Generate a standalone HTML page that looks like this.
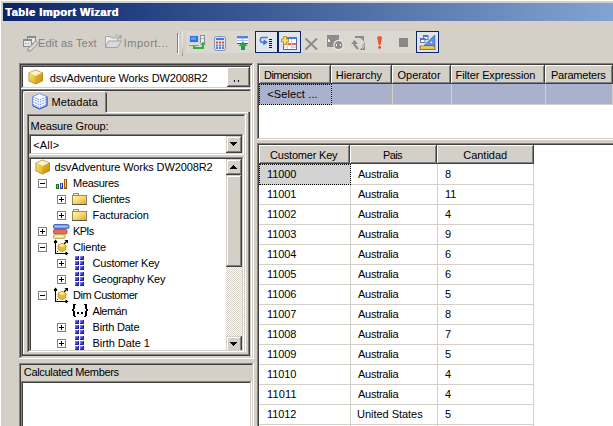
<!DOCTYPE html><html><head><meta charset="utf-8"><style>
html,body{margin:0;padding:0;width:613px;height:426px;overflow:hidden;background:#D4D0C8}
body>div,body>span,body>svg{position:absolute}
.t{font-family:"Liberation Sans",sans-serif;font-size:11px;line-height:13px;white-space:nowrap;color:#000}
</style></head><body>
<div style="left:0px;top:0px;width:613px;height:426px;background:#D4D0C8;"></div>
<div style="left:0px;top:0px;width:613px;height:1px;background:#FFFFFF;"></div>
<div style="left:0px;top:0px;width:1px;height:426px;background:#FFFFFF;"></div>
<div style="left:3px;top:3px;width:610px;height:18px;background:linear-gradient(to right,#0A246A 0px,#A6CAF0 790px)"></div>
<span class="t" style="left:5.00px;top:6px;color:#fff;letter-spacing:0.500px;font-weight:bold;font-size:11px;text-shadow:0.6px 0 0 #fff">Table Import Wizard</span>
<svg style="left:22px;top:35px" width="17" height="17" viewBox="0 0 17 17" shape-rendering="crispEdges">
<rect x="5" y="1" width="9" height="8" fill="#8a8a8a"/><rect x="6" y="3" width="7" height="5" fill="#e6e6e6"/>
<rect x="1" y="4" width="9" height="8" fill="#8a8a8a"/><rect x="2" y="6" width="7" height="5" fill="#e6e6e6"/>
<rect x="3" y="8" width="1" height="1" fill="#8a8a8a"/><rect x="6" y="8" width="1" height="1" fill="#8a8a8a"/></svg>
<svg style="left:22px;top:35px" width="17" height="17" viewBox="0 0 17 17"><path d="M13.5 6 L16 8.5 L8.5 16 L6 16 L6 13.5 Z" fill="#dcdcdc" stroke="#8a8a8a" stroke-width="1"/><path d="M12 8.5 L8 12.5" stroke="#b0b0b0" stroke-width="1"/></svg>
<span class="t" style="left:38.00px;top:37px;color:#808080;letter-spacing:0.181px;">Edit as Text</span>
<svg style="left:104px;top:34px" width="19" height="15" viewBox="0 0 19 15">
<path d="M1.5 2.5 H6.5 L7.5 4 H13.5 V13.5 H1.5 Z" fill="#ececec" stroke="#a4a4a4"/>
<path d="M1.5 13.5 L4.5 7 H17.5 L13.5 13.5 Z" fill="#d9d9d9" stroke="#a4a4a4"/>
<path d="M10.5 2.5 Q12.5 0.3 15 1.3" fill="none" stroke="#a8a8a8"/>
<path d="M13.8 3.8 L17.5 0.5 V4.8 Z" fill="#a0a0a0"/></svg>
<span class="t" style="left:123.70px;top:37px;color:#808080;letter-spacing:0.500px;">Import...</span>
<div style="left:177px;top:33px;width:1px;height:20px;background:#808080;"></div>
<div style="left:178px;top:34px;width:1px;height:20px;background:#FFFFFF;"></div>
<div style="left:182px;top:31px;width:1px;height:25px;background:linear-gradient(#f0eee8 0%,#e4e2dc 55%,#a8a8a8 90%,#909090 100%)"></div>
<div style="left:186px;top:31px;width:253px;height:22px;background:#DBD8D1;"></div>
<svg style="left:188px;top:34px" width="18" height="17" viewBox="0 0 18 17" shape-rendering="crispEdges">
<rect x="1" y="1" width="10" height="8" fill="#c8d4e4"/>
<rect x="2" y="2" width="8" height="6" fill="#2f6fe0"/>
<rect x="3" y="3" width="5" height="3" fill="#5a9af4"/>
<rect x="1" y="9" width="10" height="3" fill="#dcdcdc"/><rect x="1" y="11" width="10" height="1" fill="#8a8f9a"/>
<rect x="2" y="10" width="3" height="1" fill="#e0f0a0"/>
<rect x="12" y="1" width="5" height="8" fill="#eef0f4"/>
<rect x="12" y="1" width="1" height="8" fill="#8890a0"/><rect x="16" y="1" width="1" height="8" fill="#8890a0"/><rect x="12" y="1" width="5" height="1" fill="#8890a0"/>
<rect x="13" y="4" width="3" height="1" fill="#a8b0c0"/>
<rect x="5" y="12" width="2" height="3" fill="#3aa83a"/>
<rect x="5" y="13" width="11" height="2" fill="#3aa83a"/>
<rect x="14" y="9" width="2" height="6" fill="#3aa83a"/></svg>
<svg style="left:188px;top:34px" width="18" height="17" viewBox="0 0 18 17"><path d="M12 10.8 L15 7.8 L18 10.8 Z" fill="#3aa83a"/></svg>
<svg style="left:213px;top:36px" width="14" height="16" viewBox="0 0 14 16">
<rect x="1.5" y="0.5" width="11" height="14" rx="2" fill="#dfe6f2" stroke="#8494b4"/>
<rect x="3" y="2" width="8" height="2" fill="#4a78d8"/>
<rect x="3" y="5.5" width="2" height="2" fill="#e05030"/><rect x="6" y="5.5" width="2" height="2" fill="#e05030"/><rect x="9" y="5.5" width="2" height="2" fill="#e05030"/>
<rect x="3" y="8.5" width="2" height="2" fill="#5a80d8"/><rect x="6" y="8.5" width="2" height="2" fill="#5a80d8"/><rect x="9" y="8.5" width="2" height="2" fill="#5a80d8"/>
<rect x="3" y="11" width="2" height="2" fill="#5a80d8"/><rect x="6" y="11" width="2" height="2" fill="#5a80d8"/><rect x="9" y="11" width="2" height="2" fill="#5a80d8"/></svg>
<svg style="left:236px;top:35px" width="13" height="16" viewBox="0 0 13 16" shape-rendering="crispEdges">
<rect x="1" y="1" width="11" height="8" fill="#ffffff"/>
<rect x="1" y="1" width="11" height="2" fill="#5080e0"/>
<rect x="1" y="3" width="11" height="1" fill="#b0c8f4"/>
<rect x="1" y="5" width="11" height="1" fill="#a8c0f0"/>
<rect x="6" y="3" width="1" height="5" fill="#a8c0f0"/>
<rect x="1" y="8" width="11" height="1" fill="#34508a"/>
<rect x="5" y="10" width="4" height="5" fill="#1e9e40"/></svg>
<svg style="left:236px;top:35px" width="13" height="16" viewBox="0 0 13 16"><path d="M7 6.5 L11.5 11 H2.5 Z" fill="#22a848"/></svg>
<div style="left:255px;top:31px;width:23px;height:22px;background:#0A246A;"></div>
<div style="left:256px;top:32px;width:21px;height:20px;background:#E2E5ED;"></div>
<div style="left:278px;top:31px;width:23px;height:22px;background:#0A246A;"></div>
<div style="left:279px;top:32px;width:21px;height:20px;background:#E2E5ED;"></div>
<div style="left:416px;top:31px;width:23px;height:22px;background:#0A246A;"></div>
<div style="left:417px;top:32px;width:21px;height:20px;background:#E2E5ED;"></div>
<svg style="left:258px;top:36px" width="17" height="13" viewBox="0 0 17 13">
<path d="M9.7 1.6 H4.2 Q2.4 1.6 2.4 3.5 V4.6 Q2.4 6.4 4.6 6.6 H6.5" fill="none" stroke="#4a78d8" stroke-width="1.5"/>
<path d="M5.6 3.4 L9.9 6.3 L5.2 9.4 Z" fill="#3f6fd4"/></svg>
<svg style="left:258px;top:36px" width="17" height="13" viewBox="0 0 17 13" shape-rendering="crispEdges"><rect x="11" y="3" width="3" height="1" fill="#111"/><rect x="11" y="5" width="3" height="1" fill="#111"/><rect x="11" y="7" width="3" height="1" fill="#111"/><rect x="11" y="9" width="3" height="1" fill="#111"/><rect x="11" y="11" width="3" height="1" fill="#111"/></svg>
<svg style="left:280px;top:35px" width="19" height="16" viewBox="0 0 19 16" shape-rendering="crispEdges">
<rect x="3" y="2" width="14" height="13" fill="#ffffff"/>
<rect x="3" y="2" width="1" height="13" fill="#5a6a8a"/><rect x="16" y="2" width="1" height="13" fill="#5a6a8a"/><rect x="3" y="14" width="14" height="1" fill="#5a6a8a"/>
<rect x="3" y="2" width="14" height="2" fill="#4a7ad8"/>
<rect x="4" y="8" width="12" height="2" fill="#ee6644"/>
<rect x="7" y="4" width="1" height="10" fill="#c8d0e0"/><rect x="11" y="4" width="1" height="10" fill="#c8d0e0"/>
<rect x="4" y="11" width="3" height="2" fill="#dde8ff"/><rect x="12" y="11" width="4" height="2" fill="#c8d8f8"/></svg>
<svg style="left:280px;top:35px" width="19" height="16" viewBox="0 0 19 16"><path d="M3.5 1.5 H6.5 V4 H8.5 V7 H6.5 V9.5 H3.5 V7 H1.5 V4 H3.5 Z" fill="#f4dc70" stroke="#b89028" stroke-width="0.9"/></svg>
<svg style="left:304px;top:37px" width="15" height="14" viewBox="0 0 15 14"><path d="M1.5 1.5 L13 12.5 M13 1.5 L1.5 12.5" stroke="#8c8c8c" stroke-width="2"/></svg>
<svg style="left:326px;top:34px" width="19" height="18" viewBox="0 0 19 18" shape-rendering="crispEdges">
<rect x="1" y="1" width="12" height="12" fill="#8c8c8c"/>
<rect x="2" y="5" width="1" height="3" fill="#f4f4f4"/><rect x="3" y="6" width="1" height="2" fill="#f4f4f4"/></svg>
<svg style="left:326px;top:34px" width="19" height="18" viewBox="0 0 19 18">
<circle cx="12.5" cy="11" r="4.6" fill="#8c8c8c" stroke="#ececec" stroke-width="1.2"/></svg>
<svg style="left:326px;top:34px" width="19" height="18" viewBox="0 0 19 18" shape-rendering="crispEdges"><rect x="10" y="10" width="1" height="2" fill="#f0f0f0"/><rect x="14" y="10" width="1" height="2" fill="#f0f0f0"/></svg>
<svg style="left:350px;top:35px" width="16" height="16" viewBox="0 0 16 16">
<path d="M5 2 H11 L13 4" fill="none" stroke="#8c8c8c" stroke-width="2.2"/>
<path d="M10 1 H14 V7 Z" fill="#8c8c8c"/>
<path d="M1 9 L4.5 5 L8 9 Z" fill="#8c8c8c"/>
<path d="M4.5 8 V10 L8 14" fill="none" stroke="#8c8c8c" stroke-width="2.2"/>
<path d="M15 7 V15 H10 Z" fill="#8c8c8c"/>
<path d="M11 12 L12.5 13.5 L14.5 10" fill="none" stroke="#e0ddd6" stroke-width="1"/></svg>
<svg style="left:375px;top:35px" width="9" height="15" viewBox="0 0 9 15">
<path d="M2.6 2.2 Q4.6 0.8 6.6 2.2 L5 10 H4.2 Z" fill="#f25a34" stroke="#d83c18" stroke-width="0.7"/>
<circle cx="4.6" cy="12.4" r="1.4" fill="#e84420"/></svg>
<div style="left:399px;top:38px;width:9px;height:9px;background:#888888;"></div>
<svg style="left:419px;top:34px" width="18" height="17" viewBox="0 0 18 17">
<path d="M5 11.5 L15.8 1 V11.5 Z" fill="#5f8fe6" stroke="#3a5cb8" stroke-width="0.7"/>
<circle cx="12.3" cy="8.3" r="0.9" fill="#e8f0ff"/>
<rect x="4.5" y="1.5" width="4.5" height="4" fill="#f4f8ff" stroke="#4a5a80" stroke-width="0.8"/><rect x="4.5" y="1.5" width="4.5" height="1.5" fill="#4a7ad8"/>
<rect x="1.5" y="4.5" width="4.5" height="4" fill="#f4f8ff" stroke="#4a5a80" stroke-width="0.8"/><rect x="1.5" y="4.5" width="4.5" height="1.5" fill="#4a7ad8"/>
<rect x="1" y="12" width="15" height="3.6" fill="#ecbe48" stroke="#8a6810" stroke-width="0.8"/>
<path d="M3 12 V13.5 M5 12 V13.5 M7 12 V13.5 M9 12 V13.5 M11 12 V13.5 M13 12 V13.5" stroke="#fff2c0" stroke-width="0.8"/></svg>
<div style="left:19px;top:63px;width:234px;height:1px;background:#808080;"></div>
<div style="left:19px;top:63px;width:1px;height:295px;background:#808080;"></div>
<div style="left:20px;top:64px;width:232px;height:1px;background:#404040;"></div>
<div style="left:20px;top:64px;width:1px;height:293px;background:#404040;"></div>
<div style="left:19px;top:358px;width:235px;height:1px;background:#FFFFFF;"></div>
<div style="left:253px;top:63px;width:1px;height:296px;background:#FFFFFF;"></div>
<div style="left:20px;top:357px;width:233px;height:1px;background:#D4D0C8;"></div>
<div style="left:252px;top:64px;width:1px;height:294px;background:#D4D0C8;"></div>
<div style="left:21px;top:65px;width:231px;height:24px;background:#FFFFFF;"></div>
<div style="left:21px;top:65px;width:230px;height:1px;background:#808080;"></div>
<div style="left:21px;top:65px;width:1px;height:23px;background:#808080;"></div>
<div style="left:22px;top:66px;width:228px;height:1px;background:#404040;"></div>
<div style="left:22px;top:66px;width:1px;height:21px;background:#404040;"></div>
<div style="left:21px;top:88px;width:231px;height:1px;background:#FFFFFF;"></div>
<div style="left:251px;top:65px;width:1px;height:24px;background:#FFFFFF;"></div>
<div style="left:22px;top:87px;width:229px;height:1px;background:#D4D0C8;"></div>
<div style="left:250px;top:66px;width:1px;height:22px;background:#D4D0C8;"></div>
<svg style="left:28px;top:69px" width="16" height="16" viewBox="0 0 16 16"><defs><linearGradient id="cl1" x1="0" y1="0" x2="1" y2="1"><stop offset="0" stop-color="#f6e07a"/><stop offset="1" stop-color="#e0b428"/></linearGradient>
<linearGradient id="cr1" x1="0" y1="0" x2="1" y2="1"><stop offset="0" stop-color="#e8b830"/><stop offset="1" stop-color="#c89010"/></linearGradient></defs>
<path d="M7.5 0.5 L15 3.8 V12 L7.5 15.5 L0.5 12 V3.8 Z" fill="#b88a18"/>
<path d="M7.5 1.3 L14.2 4.1 L7.5 7.3 L1.3 4.1 Z" fill="#fbf3cc"/>
<path d="M7.5 7.3 L14.2 4.1 V11.6 L7.5 14.7 Z" fill="url(#cr1)"/>
<path d="M1.3 4.1 L7.5 7.3 V14.7 L1.3 11.6 Z" fill="url(#cl1)"/></svg>
<span class="t" style="left:49.80px;top:72px;color:#000;letter-spacing:-0.131px;">dsvAdventure Works DW2008R2</span>
<div style="left:227px;top:67px;width:22px;height:20px;background:#D4D0C8;"></div>
<div style="left:227px;top:67px;width:22px;height:1px;background:#FFFFFF;"></div>
<div style="left:227px;top:67px;width:1px;height:19px;background:#FFFFFF;"></div>
<div style="left:227px;top:86px;width:23px;height:1px;background:#404040;"></div>
<div style="left:249px;top:67px;width:1px;height:20px;background:#404040;"></div>
<div style="left:228px;top:85px;width:21px;height:1px;background:#808080;"></div>
<div style="left:248px;top:68px;width:1px;height:18px;background:#808080;"></div>
<div style="left:233px;top:80px;width:1px;height:2px;background:#e0c070;"></div>
<div style="left:234px;top:80px;width:1px;height:2px;background:#180c48;"></div>
<div style="left:235px;top:80px;width:1px;height:2px;background:#a0e0d8;"></div>
<div style="left:237px;top:80px;width:1px;height:2px;background:#e0c070;"></div>
<div style="left:238px;top:80px;width:1px;height:2px;background:#180c48;"></div>
<div style="left:239px;top:80px;width:1px;height:2px;background:#a0e0d8;"></div>
<div style="left:21px;top:89px;width:230px;height:1px;background:#808080;"></div>
<div style="left:21px;top:89px;width:1px;height:268px;background:#808080;"></div>
<div style="left:22px;top:90px;width:228px;height:1px;background:#404040;"></div>
<div style="left:22px;top:90px;width:1px;height:266px;background:#404040;"></div>
<div style="left:21px;top:357px;width:231px;height:1px;background:#FFFFFF;"></div>
<div style="left:251px;top:89px;width:1px;height:269px;background:#FFFFFF;"></div>
<div style="left:22px;top:356px;width:229px;height:1px;background:#D4D0C8;"></div>
<div style="left:250px;top:90px;width:1px;height:267px;background:#D4D0C8;"></div>
<div style="left:21px;top:357px;width:231px;height:1px;background:#D4D0C8;"></div>
<div style="left:107px;top:112px;width:141px;height:1px;background:#FFFFFF;"></div>
<div style="left:23px;top:112px;width:1px;height:243px;background:#FFFFFF;"></div>
<div style="left:248px;top:112px;width:1px;height:243px;background:#808080;"></div>
<div style="left:249px;top:112px;width:1px;height:244px;background:#404040;"></div>
<div style="left:23px;top:354px;width:226px;height:1px;background:#808080;"></div>
<div style="left:23px;top:355px;width:227px;height:1px;background:#404040;"></div>
<div style="left:25px;top:91px;width:80px;height:1px;background:#FFFFFF;"></div>
<div style="left:23px;top:93px;width:1px;height:20px;background:#FFFFFF;"></div>
<div style="left:24px;top:92px;width:1px;height:1px;background:#FFFFFF;"></div>
<div style="left:105px;top:92px;width:1px;height:20px;background:#808080;"></div>
<div style="left:106px;top:93px;width:1px;height:19px;background:#404040;"></div>
<svg style="left:32px;top:93px" width="16" height="17" viewBox="0 0 16 17">
<path d="M7.5 0.5 L15 3.6 V12.6 L7.5 16 L0.5 12.6 V3.6 Z" fill="#f4f8ff" stroke="#6a8ce0" stroke-width="0.9"/>
<path d="M0.8 6 L7.5 9.2 L15 6 M0.8 8.6 L7.5 11.8 L15 8.6 M0.8 11.2 L7.5 14.4 L15 11.2 M0.8 3.8 L7.5 7 L15 3.8" fill="none" stroke="#6a90e8" stroke-width="1" stroke-dasharray="1.6 1"/>
<path d="M0.5 12.6 L7.5 16 L15 12.6 V3.6" fill="none" stroke="#2c48b0" stroke-width="1"/></svg>
<span class="t" style="left:51.60px;top:96px;color:#000;letter-spacing:0.054px;">Metadata</span>
<div style="left:27px;top:114px;width:218px;height:1px;background:#808080;"></div>
<div style="left:27px;top:114px;width:1px;height:238px;background:#808080;"></div>
<div style="left:28px;top:115px;width:216px;height:1px;background:#404040;"></div>
<div style="left:28px;top:115px;width:1px;height:236px;background:#404040;"></div>
<div style="left:27px;top:352px;width:219px;height:1px;background:#FFFFFF;"></div>
<div style="left:245px;top:114px;width:1px;height:239px;background:#FFFFFF;"></div>
<div style="left:28px;top:351px;width:217px;height:1px;background:#D4D0C8;"></div>
<div style="left:244px;top:115px;width:1px;height:237px;background:#D4D0C8;"></div>
<div style="left:27px;top:352px;width:219px;height:1px;background:#D4D0C8;"></div>
<span class="t" style="left:30.60px;top:120px;color:#000;letter-spacing:-0.120px;">Measure Group:</span>
<div style="left:29px;top:134px;width:215px;height:21px;background:#FFFFFF;"></div>
<div style="left:29px;top:134px;width:214px;height:1px;background:#808080;"></div>
<div style="left:29px;top:134px;width:1px;height:20px;background:#808080;"></div>
<div style="left:30px;top:135px;width:212px;height:1px;background:#404040;"></div>
<div style="left:30px;top:135px;width:1px;height:18px;background:#404040;"></div>
<div style="left:29px;top:154px;width:215px;height:1px;background:#FFFFFF;"></div>
<div style="left:243px;top:134px;width:1px;height:21px;background:#FFFFFF;"></div>
<div style="left:30px;top:153px;width:213px;height:1px;background:#D4D0C8;"></div>
<div style="left:242px;top:135px;width:1px;height:19px;background:#D4D0C8;"></div>
<span class="t" style="left:33.20px;top:139px;color:#000;letter-spacing:0.200px;">&lt;All&gt;</span>
<div style="left:226px;top:136px;width:16px;height:17px;background:#D4D0C8;"></div>
<div style="left:226px;top:136px;width:15px;height:1px;background:#D4D0C8;"></div>
<div style="left:226px;top:136px;width:1px;height:16px;background:#D4D0C8;"></div>
<div style="left:227px;top:137px;width:13px;height:1px;background:#FFFFFF;"></div>
<div style="left:227px;top:137px;width:1px;height:14px;background:#FFFFFF;"></div>
<div style="left:226px;top:152px;width:16px;height:1px;background:#404040;"></div>
<div style="left:241px;top:136px;width:1px;height:17px;background:#404040;"></div>
<div style="left:227px;top:151px;width:14px;height:1px;background:#808080;"></div>
<div style="left:240px;top:137px;width:1px;height:15px;background:#808080;"></div>
<svg style="left:230px;top:142px" width="8" height="5" viewBox="0 0 8 5" shape-rendering="crispEdges"><path d="M0 0 H7 L3.5 4 Z" fill="#000"/></svg>
<div style="left:29px;top:157px;width:215px;height:195px;background:#FFFFFF;"></div>
<div style="left:29px;top:157px;width:214px;height:1px;background:#808080;"></div>
<div style="left:29px;top:157px;width:1px;height:194px;background:#808080;"></div>
<div style="left:30px;top:158px;width:212px;height:1px;background:#404040;"></div>
<div style="left:30px;top:158px;width:1px;height:192px;background:#404040;"></div>
<div style="left:29px;top:351px;width:215px;height:1px;background:#FFFFFF;"></div>
<div style="left:243px;top:157px;width:1px;height:195px;background:#FFFFFF;"></div>
<div style="left:30px;top:350px;width:213px;height:1px;background:#D4D0C8;"></div>
<div style="left:242px;top:158px;width:1px;height:193px;background:#D4D0C8;"></div>
<div style="left:226px;top:159px;width:16px;height:191px;background-color:#fff;background-image:linear-gradient(45deg,#D4D0C8 25%,transparent 25%,transparent 75%,#D4D0C8 75%),linear-gradient(45deg,#D4D0C8 25%,transparent 25%,transparent 75%,#D4D0C8 75%);background-size:2px 2px;background-position:0 0,1px 1px"></div>
<div style="left:226px;top:159px;width:16px;height:16px;background:#D4D0C8;"></div>
<div style="left:226px;top:159px;width:15px;height:1px;background:#D4D0C8;"></div>
<div style="left:226px;top:159px;width:1px;height:15px;background:#D4D0C8;"></div>
<div style="left:227px;top:160px;width:13px;height:1px;background:#FFFFFF;"></div>
<div style="left:227px;top:160px;width:1px;height:13px;background:#FFFFFF;"></div>
<div style="left:226px;top:174px;width:16px;height:1px;background:#404040;"></div>
<div style="left:241px;top:159px;width:1px;height:16px;background:#404040;"></div>
<div style="left:227px;top:173px;width:14px;height:1px;background:#808080;"></div>
<div style="left:240px;top:160px;width:1px;height:14px;background:#808080;"></div>
<svg style="left:230px;top:165px" width="8" height="5" viewBox="0 0 8 5" shape-rendering="crispEdges"><path d="M3.5 0 L7 4 H0 Z" fill="#000"/></svg>
<div style="left:226px;top:175px;width:16px;height:92px;background:#D4D0C8;"></div>
<div style="left:226px;top:175px;width:15px;height:1px;background:#D4D0C8;"></div>
<div style="left:226px;top:175px;width:1px;height:91px;background:#D4D0C8;"></div>
<div style="left:227px;top:176px;width:13px;height:1px;background:#FFFFFF;"></div>
<div style="left:227px;top:176px;width:1px;height:89px;background:#FFFFFF;"></div>
<div style="left:226px;top:266px;width:16px;height:1px;background:#404040;"></div>
<div style="left:241px;top:175px;width:1px;height:92px;background:#404040;"></div>
<div style="left:227px;top:265px;width:14px;height:1px;background:#808080;"></div>
<div style="left:240px;top:176px;width:1px;height:90px;background:#808080;"></div>
<div style="left:226px;top:336px;width:16px;height:16px;background:#D4D0C8;"></div>
<div style="left:226px;top:336px;width:15px;height:1px;background:#D4D0C8;"></div>
<div style="left:226px;top:336px;width:1px;height:15px;background:#D4D0C8;"></div>
<div style="left:227px;top:337px;width:13px;height:1px;background:#FFFFFF;"></div>
<div style="left:227px;top:337px;width:1px;height:13px;background:#FFFFFF;"></div>
<div style="left:226px;top:351px;width:16px;height:1px;background:#404040;"></div>
<div style="left:241px;top:336px;width:1px;height:16px;background:#404040;"></div>
<div style="left:227px;top:350px;width:14px;height:1px;background:#808080;"></div>
<div style="left:240px;top:337px;width:1px;height:14px;background:#808080;"></div>
<svg style="left:230px;top:342px" width="8" height="5" viewBox="0 0 8 5" shape-rendering="crispEdges"><path d="M0 0 H7 L3.5 4 Z" fill="#000"/></svg>
<div style="left:30px;top:350px;width:213px;height:1px;background:#D4D0C8;"></div>
<div style="left:29px;top:351px;width:215px;height:1px;background:#FFFFFF;"></div>
<svg style="left:35px;top:159px" width="16" height="16" viewBox="0 0 16 16"><defs><linearGradient id="cl2" x1="0" y1="0" x2="1" y2="1"><stop offset="0" stop-color="#f6e07a"/><stop offset="1" stop-color="#e0b428"/></linearGradient>
<linearGradient id="cr2" x1="0" y1="0" x2="1" y2="1"><stop offset="0" stop-color="#e8b830"/><stop offset="1" stop-color="#c89010"/></linearGradient></defs>
<path d="M7.5 0.5 L15 3.8 V12 L7.5 15.5 L0.5 12 V3.8 Z" fill="#b88a18"/>
<path d="M7.5 1.3 L14.2 4.1 L7.5 7.3 L1.3 4.1 Z" fill="#fbf3cc"/>
<path d="M7.5 7.3 L14.2 4.1 V11.6 L7.5 14.7 Z" fill="url(#cr2)"/>
<path d="M1.3 4.1 L7.5 7.3 V14.7 L1.3 11.6 Z" fill="url(#cl2)"/></svg>
<span class="t" style="left:54.40px;top:161px;color:#000;letter-spacing:-0.112px;">dsvAdventure Works DW2008R2</span>
<div style="left:38px;top:179px;width:9px;height:9px;background:#808080;"></div>
<div style="left:39px;top:180px;width:7px;height:7px;background:#FFFFFF;"></div>
<div style="left:40px;top:183px;width:5px;height:1px;background:#000;"></div>
<div style="left:56px;top:184px;width:3px;height:5px;background:#2a9a2a;box-shadow:inset 1px 0 0 #167016,inset -1px -1px 0 #106010"></div>
<div style="left:57px;top:185px;width:1px;height:3px;background:#70d070;"></div>
<div style="left:60px;top:183px;width:3px;height:6px;background:#7088e0;box-shadow:inset 1px 0 0 #3848b8,inset -1px -1px 0 #2030a0"></div>
<div style="left:61px;top:184px;width:1px;height:3px;background:#c0d0f8;"></div>
<div style="left:64px;top:179px;width:3px;height:10px;background:#e09018;box-shadow:inset 1px 0 0 #a06000,inset -1px -1px 0 #8a5200"></div>
<div style="left:65px;top:180px;width:1px;height:7px;background:#f8d070;"></div>
<span class="t" style="left:73.00px;top:177px;color:#000;letter-spacing:-0.286px;">Measures</span>
<div style="left:57px;top:195px;width:9px;height:9px;background:#808080;"></div>
<div style="left:58px;top:196px;width:7px;height:7px;background:#FFFFFF;"></div>
<div style="left:59px;top:199px;width:5px;height:1px;background:#000;"></div>
<div style="left:61px;top:197px;width:1px;height:5px;background:#000;"></div>
<svg style="left:72px;top:193px" width="16" height="13" viewBox="0 0 16 13" shape-rendering="crispEdges"><defs><linearGradient id="fg1" x1="0" y1="0" x2="1" y2="1"><stop offset="0" stop-color="#fff6b8"/><stop offset="0.5" stop-color="#f6d670"/><stop offset="1" stop-color="#eaa828"/></linearGradient></defs>
<rect x="1" y="0" width="6" height="2" fill="#a09070"/><rect x="2" y="1" width="4" height="1" fill="#fff0a8"/>
<rect x="0" y="2" width="15" height="10" fill="#968866"/>
<rect x="1" y="3" width="13" height="8" fill="url(#fg1)"/>
<rect x="0" y="11" width="15" height="1" fill="#5c5444"/></svg>
<span class="t" style="left:92.60px;top:193px;color:#000;letter-spacing:-0.313px;">Clientes</span>
<div style="left:57px;top:211px;width:9px;height:9px;background:#808080;"></div>
<div style="left:58px;top:212px;width:7px;height:7px;background:#FFFFFF;"></div>
<div style="left:59px;top:215px;width:5px;height:1px;background:#000;"></div>
<div style="left:61px;top:213px;width:1px;height:5px;background:#000;"></div>
<svg style="left:72px;top:209px" width="16" height="13" viewBox="0 0 16 13" shape-rendering="crispEdges"><defs><linearGradient id="fg2" x1="0" y1="0" x2="1" y2="1"><stop offset="0" stop-color="#fff6b8"/><stop offset="0.5" stop-color="#f6d670"/><stop offset="1" stop-color="#eaa828"/></linearGradient></defs>
<rect x="1" y="0" width="6" height="2" fill="#a09070"/><rect x="2" y="1" width="4" height="1" fill="#fff0a8"/>
<rect x="0" y="2" width="15" height="10" fill="#968866"/>
<rect x="1" y="3" width="13" height="8" fill="url(#fg2)"/>
<rect x="0" y="11" width="15" height="1" fill="#5c5444"/></svg>
<span class="t" style="left:92.60px;top:209px;color:#000;letter-spacing:-0.120px;">Facturacion</span>
<div style="left:38px;top:227px;width:9px;height:9px;background:#808080;"></div>
<div style="left:39px;top:228px;width:7px;height:7px;background:#FFFFFF;"></div>
<div style="left:40px;top:231px;width:5px;height:1px;background:#000;"></div>
<div style="left:42px;top:229px;width:1px;height:5px;background:#000;"></div>
<svg style="left:53px;top:224px" width="17" height="15" viewBox="0 0 17 15">
<rect x="0.5" y="0.5" width="15.5" height="4.2" rx="1.5" fill="#7a9ce8" stroke="#3a5cc0" stroke-width="0.9"/>
<rect x="2" y="1.8" width="12" height="1.2" fill="#a8c0f4"/>
<rect x="0.5" y="5.5" width="13.5" height="4.5" rx="1.5" fill="#e07050" stroke="#b84a2a" stroke-width="0.9"/>
<rect x="0.6" y="10.8" width="11.5" height="3.6" rx="0.8" fill="#f6e48a" stroke="#b8a460" stroke-width="0.9"/>
<rect x="2" y="11.6" width="8" height="1.2" fill="#fff8d0"/></svg>
<span class="t" style="left:73.00px;top:225px;color:#000;letter-spacing:-0.666px;">KPIs</span>
<div style="left:38px;top:243px;width:9px;height:9px;background:#808080;"></div>
<div style="left:39px;top:244px;width:7px;height:7px;background:#FFFFFF;"></div>
<div style="left:40px;top:247px;width:5px;height:1px;background:#000;"></div>
<svg style="left:52px;top:239px" width="17" height="16" viewBox="0 0 17 16" shape-rendering="crispEdges"><rect x="3" y="2" width="1" height="13" fill="#000"/><rect x="3" y="14" width="13" height="1" fill="#000"/><rect x="2" y="3" width="3" height="1" fill="#000"/><rect x="14" y="13" width="1" height="3" fill="#000"/><rect x="5" y="12" width="1" height="1" fill="#333"/></svg>
<svg style="left:52px;top:239px" width="17" height="16" viewBox="0 0 17 16">
<path d="M3.5 0.5 L1.5 3 H5.5 Z M16.5 14.5 L13.5 12.5 V16.5 Z" fill="#000"/>
<path d="M12 5 L15.5 1.5" fill="none" stroke="#000" stroke-width="1.2"/>
<path d="M12.5 1 H16 V4.5 Z" fill="#000"/>
<path d="M10 4.2 L14 6.3 V10.7 L10 12.8 L6 10.7 V6.3 Z" fill="#e8bc30" stroke="#b08a20" stroke-width="0.7"/>
<path d="M10 4.8 L13.4 6.5 L10 8.2 L6.6 6.5 Z" fill="#fbeaa0"/></svg>
<span class="t" style="left:73.00px;top:241px;color:#000;letter-spacing:-0.201px;">Cliente</span>
<div style="left:57px;top:259px;width:9px;height:9px;background:#808080;"></div>
<div style="left:58px;top:260px;width:7px;height:7px;background:#FFFFFF;"></div>
<div style="left:59px;top:263px;width:5px;height:1px;background:#000;"></div>
<div style="left:61px;top:261px;width:1px;height:5px;background:#000;"></div>
<div style="left:75px;top:256px;width:4px;height:4px;background:#3c3cc8;box-shadow:inset -1px -1px 0 #2222a4, inset 1px 1px 0 #7a7ae8"></div>
<div style="left:80px;top:256px;width:4px;height:4px;background:#3c3cc8;box-shadow:inset -1px -1px 0 #2222a4, inset 1px 1px 0 #7a7ae8"></div>
<div style="left:75px;top:261px;width:4px;height:4px;background:#3c3cc8;box-shadow:inset -1px -1px 0 #2222a4, inset 1px 1px 0 #7a7ae8"></div>
<div style="left:80px;top:261px;width:4px;height:4px;background:#3c3cc8;box-shadow:inset -1px -1px 0 #2222a4, inset 1px 1px 0 #7a7ae8"></div>
<div style="left:75px;top:266px;width:4px;height:4px;background:#3c3cc8;box-shadow:inset -1px -1px 0 #2222a4, inset 1px 1px 0 #7a7ae8"></div>
<div style="left:80px;top:266px;width:4px;height:4px;background:#3c3cc8;box-shadow:inset -1px -1px 0 #2222a4, inset 1px 1px 0 #7a7ae8"></div>
<span class="t" style="left:92.60px;top:257px;color:#000;letter-spacing:-0.250px;">Customer Key</span>
<div style="left:57px;top:275px;width:9px;height:9px;background:#808080;"></div>
<div style="left:58px;top:276px;width:7px;height:7px;background:#FFFFFF;"></div>
<div style="left:59px;top:279px;width:5px;height:1px;background:#000;"></div>
<div style="left:61px;top:277px;width:1px;height:5px;background:#000;"></div>
<div style="left:75px;top:272px;width:4px;height:4px;background:#3c3cc8;box-shadow:inset -1px -1px 0 #2222a4, inset 1px 1px 0 #7a7ae8"></div>
<div style="left:80px;top:272px;width:4px;height:4px;background:#3c3cc8;box-shadow:inset -1px -1px 0 #2222a4, inset 1px 1px 0 #7a7ae8"></div>
<div style="left:75px;top:277px;width:4px;height:4px;background:#3c3cc8;box-shadow:inset -1px -1px 0 #2222a4, inset 1px 1px 0 #7a7ae8"></div>
<div style="left:80px;top:277px;width:4px;height:4px;background:#3c3cc8;box-shadow:inset -1px -1px 0 #2222a4, inset 1px 1px 0 #7a7ae8"></div>
<div style="left:75px;top:282px;width:4px;height:4px;background:#3c3cc8;box-shadow:inset -1px -1px 0 #2222a4, inset 1px 1px 0 #7a7ae8"></div>
<div style="left:80px;top:282px;width:4px;height:4px;background:#3c3cc8;box-shadow:inset -1px -1px 0 #2222a4, inset 1px 1px 0 #7a7ae8"></div>
<span class="t" style="left:92.60px;top:273px;color:#000;letter-spacing:-0.303px;">Geography Key</span>
<div style="left:38px;top:291px;width:9px;height:9px;background:#808080;"></div>
<div style="left:39px;top:292px;width:7px;height:7px;background:#FFFFFF;"></div>
<div style="left:40px;top:295px;width:5px;height:1px;background:#000;"></div>
<svg style="left:52px;top:287px" width="17" height="16" viewBox="0 0 17 16" shape-rendering="crispEdges"><rect x="3" y="2" width="1" height="13" fill="#000"/><rect x="3" y="14" width="13" height="1" fill="#000"/><rect x="2" y="3" width="3" height="1" fill="#000"/><rect x="14" y="13" width="1" height="3" fill="#000"/><rect x="5" y="12" width="1" height="1" fill="#333"/></svg>
<svg style="left:52px;top:287px" width="17" height="16" viewBox="0 0 17 16">
<path d="M3.5 0.5 L1.5 3 H5.5 Z M16.5 14.5 L13.5 12.5 V16.5 Z" fill="#000"/>
<path d="M12 5 L15.5 1.5" fill="none" stroke="#000" stroke-width="1.2"/>
<path d="M12.5 1 H16 V4.5 Z" fill="#000"/>
<path d="M10 4.2 L14 6.3 V10.7 L10 12.8 L6 10.7 V6.3 Z" fill="#e8bc30" stroke="#b08a20" stroke-width="0.7"/>
<path d="M10 4.8 L13.4 6.5 L10 8.2 L6.6 6.5 Z" fill="#fbeaa0"/></svg>
<span class="t" style="left:73.00px;top:289px;color:#000;letter-spacing:-0.485px;">Dim Customer</span>
<svg style="left:71px;top:303px" width="19" height="16" viewBox="0 0 19 16" shape-rendering="crispEdges"><g fill="#000"><rect x="3" y="1" width="2" height="1"/><rect x="2" y="1" width="2" height="5"/><rect x="1" y="6" width="2" height="2"/><rect x="2" y="8" width="2" height="5"/><rect x="3" y="13" width="2" height="1"/><rect x="13" y="1" width="2" height="1"/><rect x="14" y="1" width="2" height="5"/><rect x="15" y="6" width="2" height="2"/><rect x="14" y="8" width="2" height="5"/><rect x="13" y="13" width="2" height="1"/><rect x="6" y="9" width="2" height="2"/><rect x="10" y="9" width="2" height="2"/></g></svg>
<span class="t" style="left:92.60px;top:305px;color:#000;letter-spacing:-0.520px;">Alemán</span>
<div style="left:57px;top:323px;width:9px;height:9px;background:#808080;"></div>
<div style="left:58px;top:324px;width:7px;height:7px;background:#FFFFFF;"></div>
<div style="left:59px;top:327px;width:5px;height:1px;background:#000;"></div>
<div style="left:61px;top:325px;width:1px;height:5px;background:#000;"></div>
<div style="left:75px;top:320px;width:4px;height:4px;background:#3c3cc8;box-shadow:inset -1px -1px 0 #2222a4, inset 1px 1px 0 #7a7ae8"></div>
<div style="left:80px;top:320px;width:4px;height:4px;background:#3c3cc8;box-shadow:inset -1px -1px 0 #2222a4, inset 1px 1px 0 #7a7ae8"></div>
<div style="left:75px;top:325px;width:4px;height:4px;background:#3c3cc8;box-shadow:inset -1px -1px 0 #2222a4, inset 1px 1px 0 #7a7ae8"></div>
<div style="left:80px;top:325px;width:4px;height:4px;background:#3c3cc8;box-shadow:inset -1px -1px 0 #2222a4, inset 1px 1px 0 #7a7ae8"></div>
<div style="left:75px;top:330px;width:4px;height:4px;background:#3c3cc8;box-shadow:inset -1px -1px 0 #2222a4, inset 1px 1px 0 #7a7ae8"></div>
<div style="left:80px;top:330px;width:4px;height:4px;background:#3c3cc8;box-shadow:inset -1px -1px 0 #2222a4, inset 1px 1px 0 #7a7ae8"></div>
<span class="t" style="left:92.60px;top:321px;color:#000;letter-spacing:-0.222px;">Birth Date</span>
<div style="left:57px;top:339px;width:9px;height:9px;background:#808080;"></div>
<div style="left:58px;top:340px;width:7px;height:7px;background:#FFFFFF;"></div>
<div style="left:59px;top:343px;width:5px;height:1px;background:#000;"></div>
<div style="left:61px;top:341px;width:1px;height:5px;background:#000;"></div>
<div style="left:75px;top:336px;width:4px;height:4px;background:#3c3cc8;box-shadow:inset -1px -1px 0 #2222a4, inset 1px 1px 0 #7a7ae8"></div>
<div style="left:80px;top:336px;width:4px;height:4px;background:#3c3cc8;box-shadow:inset -1px -1px 0 #2222a4, inset 1px 1px 0 #7a7ae8"></div>
<div style="left:75px;top:341px;width:4px;height:4px;background:#3c3cc8;box-shadow:inset -1px -1px 0 #2222a4, inset 1px 1px 0 #7a7ae8"></div>
<div style="left:80px;top:341px;width:4px;height:4px;background:#3c3cc8;box-shadow:inset -1px -1px 0 #2222a4, inset 1px 1px 0 #7a7ae8"></div>
<div style="left:75px;top:346px;width:4px;height:4px;background:#3c3cc8;box-shadow:inset -1px -1px 0 #2222a4, inset 1px 1px 0 #7a7ae8"></div>
<div style="left:80px;top:346px;width:4px;height:4px;background:#3c3cc8;box-shadow:inset -1px -1px 0 #2222a4, inset 1px 1px 0 #7a7ae8"></div>
<span class="t" style="left:92.60px;top:337px;color:#000;letter-spacing:-0.068px;">Birth Date 1</span>
<div style="left:19px;top:363px;width:234px;height:1px;background:#808080;"></div>
<div style="left:19px;top:363px;width:1px;height:77px;background:#808080;"></div>
<div style="left:20px;top:364px;width:232px;height:1px;background:#404040;"></div>
<div style="left:20px;top:364px;width:1px;height:75px;background:#404040;"></div>
<div style="left:19px;top:440px;width:235px;height:1px;background:#FFFFFF;"></div>
<div style="left:253px;top:363px;width:1px;height:78px;background:#FFFFFF;"></div>
<div style="left:20px;top:439px;width:233px;height:1px;background:#D4D0C8;"></div>
<div style="left:252px;top:364px;width:1px;height:76px;background:#D4D0C8;"></div>
<span class="t" style="left:23.80px;top:366px;color:#000;letter-spacing:-0.331px;">Calculated Members</span>
<div style="left:21px;top:381px;width:231px;height:60px;background:#FFFFFF;"></div>
<div style="left:21px;top:381px;width:230px;height:1px;background:#808080;"></div>
<div style="left:21px;top:381px;width:1px;height:59px;background:#808080;"></div>
<div style="left:22px;top:382px;width:228px;height:1px;background:#404040;"></div>
<div style="left:22px;top:382px;width:1px;height:57px;background:#404040;"></div>
<div style="left:21px;top:440px;width:231px;height:1px;background:#FFFFFF;"></div>
<div style="left:251px;top:381px;width:1px;height:60px;background:#FFFFFF;"></div>
<div style="left:22px;top:439px;width:229px;height:1px;background:#D4D0C8;"></div>
<div style="left:250px;top:382px;width:1px;height:58px;background:#D4D0C8;"></div>
<div style="left:257px;top:63px;width:384px;height:77px;background:#FFFFFF;"></div>
<div style="left:257px;top:63px;width:383px;height:1px;background:#808080;"></div>
<div style="left:257px;top:63px;width:1px;height:76px;background:#808080;"></div>
<div style="left:258px;top:64px;width:381px;height:1px;background:#404040;"></div>
<div style="left:258px;top:64px;width:1px;height:74px;background:#404040;"></div>
<div style="left:257px;top:139px;width:384px;height:1px;background:#FFFFFF;"></div>
<div style="left:640px;top:63px;width:1px;height:77px;background:#FFFFFF;"></div>
<div style="left:258px;top:138px;width:382px;height:1px;background:#D4D0C8;"></div>
<div style="left:639px;top:64px;width:1px;height:75px;background:#D4D0C8;"></div>
<div style="left:259px;top:65px;width:354px;height:19px;background:#D4D0C8;"></div>
<div style="left:259px;top:65px;width:72px;height:1px;background:#FFFFFF;"></div>
<div style="left:259px;top:65px;width:1px;height:19px;background:#FFFFFF;"></div>
<div style="left:329px;top:66px;width:1px;height:17px;background:#808080;"></div>
<div style="left:330px;top:65px;width:1px;height:19px;background:#404040;"></div>
<div style="left:260px;top:82px;width:70px;height:1px;background:#808080;"></div>
<div style="left:259px;top:83px;width:72px;height:1px;background:#404040;"></div>
<span class="t" style="left:264.00px;top:69px;color:#000;letter-spacing:-0.517px;">Dimension</span>
<div style="left:331px;top:65px;width:61px;height:1px;background:#FFFFFF;"></div>
<div style="left:331px;top:65px;width:1px;height:19px;background:#FFFFFF;"></div>
<div style="left:390px;top:66px;width:1px;height:17px;background:#808080;"></div>
<div style="left:391px;top:65px;width:1px;height:19px;background:#404040;"></div>
<div style="left:332px;top:82px;width:59px;height:1px;background:#808080;"></div>
<div style="left:331px;top:83px;width:61px;height:1px;background:#404040;"></div>
<span class="t" style="left:335.80px;top:69px;color:#000;letter-spacing:-0.108px;">Hierarchy</span>
<div style="left:392px;top:65px;width:59px;height:1px;background:#FFFFFF;"></div>
<div style="left:392px;top:65px;width:1px;height:19px;background:#FFFFFF;"></div>
<div style="left:449px;top:66px;width:1px;height:17px;background:#808080;"></div>
<div style="left:450px;top:65px;width:1px;height:19px;background:#404040;"></div>
<div style="left:393px;top:82px;width:57px;height:1px;background:#808080;"></div>
<div style="left:392px;top:83px;width:59px;height:1px;background:#404040;"></div>
<span class="t" style="left:397.60px;top:69px;color:#000;letter-spacing:-0.062px;">Operator</span>
<div style="left:451px;top:65px;width:94px;height:1px;background:#FFFFFF;"></div>
<div style="left:451px;top:65px;width:1px;height:19px;background:#FFFFFF;"></div>
<div style="left:543px;top:66px;width:1px;height:17px;background:#808080;"></div>
<div style="left:544px;top:65px;width:1px;height:19px;background:#404040;"></div>
<div style="left:452px;top:82px;width:92px;height:1px;background:#808080;"></div>
<div style="left:451px;top:83px;width:94px;height:1px;background:#404040;"></div>
<span class="t" style="left:455.60px;top:69px;color:#000;letter-spacing:-0.137px;">Filter Expression</span>
<div style="left:545px;top:65px;width:68px;height:1px;background:#FFFFFF;"></div>
<div style="left:545px;top:65px;width:1px;height:19px;background:#FFFFFF;"></div>
<div style="left:611px;top:66px;width:1px;height:17px;background:#808080;"></div>
<div style="left:612px;top:65px;width:1px;height:19px;background:#404040;"></div>
<div style="left:546px;top:82px;width:66px;height:1px;background:#808080;"></div>
<div style="left:545px;top:83px;width:68px;height:1px;background:#404040;"></div>
<span class="t" style="left:551.00px;top:69px;color:#000;letter-spacing:-0.223px;">Parameters</span>
<div style="left:259px;top:84px;width:354px;height:21px;background:#A9B1CD;"></div>
<div style="left:612px;top:84px;width:1px;height:21px;background:#D4D0C8;"></div>
<div style="left:259px;top:104px;width:354px;height:1px;background:#D4D0C8;"></div>
<div style="left:331px;top:84px;width:1px;height:21px;background:#D4D0C8;"></div>
<div style="left:392px;top:84px;width:1px;height:21px;background:#D4D0C8;"></div>
<div style="left:451px;top:84px;width:1px;height:21px;background:#D4D0C8;"></div>
<div style="left:545px;top:84px;width:1px;height:21px;background:#D4D0C8;"></div>
<div style="left:259px;top:84px;width:73px;height:21px;box-sizing:border-box;border:1px dotted #000"></div>
<span class="t" style="left:267.20px;top:88px;color:#000;letter-spacing:0.120px;">&lt;Select ...</span>
<div style="left:257px;top:143px;width:384px;height:298px;background:#FFFFFF;"></div>
<div style="left:257px;top:143px;width:383px;height:1px;background:#808080;"></div>
<div style="left:257px;top:143px;width:1px;height:297px;background:#808080;"></div>
<div style="left:258px;top:144px;width:381px;height:1px;background:#404040;"></div>
<div style="left:258px;top:144px;width:1px;height:295px;background:#404040;"></div>
<div style="left:257px;top:440px;width:384px;height:1px;background:#FFFFFF;"></div>
<div style="left:640px;top:143px;width:1px;height:298px;background:#FFFFFF;"></div>
<div style="left:258px;top:439px;width:382px;height:1px;background:#D4D0C8;"></div>
<div style="left:639px;top:144px;width:1px;height:296px;background:#D4D0C8;"></div>
<div style="left:259px;top:145px;width:91px;height:19px;background:#D4D0C8;"></div>
<div style="left:259px;top:145px;width:91px;height:1px;background:#FFFFFF;"></div>
<div style="left:259px;top:145px;width:1px;height:19px;background:#FFFFFF;"></div>
<div style="left:348px;top:146px;width:1px;height:17px;background:#808080;"></div>
<div style="left:349px;top:145px;width:1px;height:19px;background:#404040;"></div>
<div style="left:260px;top:162px;width:89px;height:1px;background:#808080;"></div>
<div style="left:259px;top:163px;width:91px;height:1px;background:#404040;"></div>
<span class="t" style="left:270.10px;top:149px;color:#000;letter-spacing:-0.204px;">Customer Key</span>
<div style="left:350px;top:145px;width:87px;height:19px;background:#D4D0C8;"></div>
<div style="left:350px;top:145px;width:87px;height:1px;background:#FFFFFF;"></div>
<div style="left:350px;top:145px;width:1px;height:19px;background:#FFFFFF;"></div>
<div style="left:435px;top:146px;width:1px;height:17px;background:#808080;"></div>
<div style="left:436px;top:145px;width:1px;height:19px;background:#404040;"></div>
<div style="left:351px;top:162px;width:85px;height:1px;background:#808080;"></div>
<div style="left:350px;top:163px;width:87px;height:1px;background:#404040;"></div>
<span class="t" style="left:383.10px;top:149px;color:#000;letter-spacing:-0.668px;">Pais</span>
<div style="left:437px;top:145px;width:97px;height:19px;background:#D4D0C8;"></div>
<div style="left:437px;top:145px;width:97px;height:1px;background:#FFFFFF;"></div>
<div style="left:437px;top:145px;width:1px;height:19px;background:#FFFFFF;"></div>
<div style="left:532px;top:146px;width:1px;height:17px;background:#808080;"></div>
<div style="left:533px;top:145px;width:1px;height:19px;background:#404040;"></div>
<div style="left:438px;top:162px;width:95px;height:1px;background:#808080;"></div>
<div style="left:437px;top:163px;width:97px;height:1px;background:#404040;"></div>
<span class="t" style="left:463.30px;top:149px;color:#000;letter-spacing:-0.034px;">Cantidad</span>
<div style="left:259px;top:184px;width:275px;height:1px;background:#D4D0C8;"></div>
<span class="t" style="left:267.00px;top:168px;color:#000;letter-spacing:-0.100px;">11000</span>
<span class="t" style="left:358.00px;top:168px;color:#000;letter-spacing:-0.267px;">Australia</span>
<span class="t" style="left:445.00px;top:168px;color:#000;letter-spacing:0.000px;">8</span>
<div style="left:259px;top:204px;width:275px;height:1px;background:#D4D0C8;"></div>
<span class="t" style="left:267.00px;top:188px;color:#000;letter-spacing:-0.100px;">11001</span>
<span class="t" style="left:358.00px;top:188px;color:#000;letter-spacing:-0.267px;">Australia</span>
<span class="t" style="left:445.00px;top:188px;color:#000;letter-spacing:0.000px;">11</span>
<div style="left:259px;top:224px;width:275px;height:1px;background:#D4D0C8;"></div>
<span class="t" style="left:267.00px;top:208px;color:#000;letter-spacing:-0.100px;">11002</span>
<span class="t" style="left:358.00px;top:208px;color:#000;letter-spacing:-0.267px;">Australia</span>
<span class="t" style="left:445.00px;top:208px;color:#000;letter-spacing:0.000px;">4</span>
<div style="left:259px;top:244px;width:275px;height:1px;background:#D4D0C8;"></div>
<span class="t" style="left:267.00px;top:228px;color:#000;letter-spacing:-0.100px;">11003</span>
<span class="t" style="left:358.00px;top:228px;color:#000;letter-spacing:-0.267px;">Australia</span>
<span class="t" style="left:445.00px;top:228px;color:#000;letter-spacing:0.000px;">9</span>
<div style="left:259px;top:264px;width:275px;height:1px;background:#D4D0C8;"></div>
<span class="t" style="left:267.00px;top:248px;color:#000;letter-spacing:-0.100px;">11004</span>
<span class="t" style="left:358.00px;top:248px;color:#000;letter-spacing:-0.267px;">Australia</span>
<span class="t" style="left:445.00px;top:248px;color:#000;letter-spacing:0.000px;">6</span>
<div style="left:259px;top:284px;width:275px;height:1px;background:#D4D0C8;"></div>
<span class="t" style="left:267.00px;top:268px;color:#000;letter-spacing:-0.100px;">11005</span>
<span class="t" style="left:358.00px;top:268px;color:#000;letter-spacing:-0.267px;">Australia</span>
<span class="t" style="left:445.00px;top:268px;color:#000;letter-spacing:0.000px;">6</span>
<div style="left:259px;top:304px;width:275px;height:1px;background:#D4D0C8;"></div>
<span class="t" style="left:267.00px;top:288px;color:#000;letter-spacing:-0.100px;">11006</span>
<span class="t" style="left:358.00px;top:288px;color:#000;letter-spacing:-0.267px;">Australia</span>
<span class="t" style="left:445.00px;top:288px;color:#000;letter-spacing:0.000px;">5</span>
<div style="left:259px;top:324px;width:275px;height:1px;background:#D4D0C8;"></div>
<span class="t" style="left:267.00px;top:308px;color:#000;letter-spacing:-0.100px;">11007</span>
<span class="t" style="left:358.00px;top:308px;color:#000;letter-spacing:-0.267px;">Australia</span>
<span class="t" style="left:445.00px;top:308px;color:#000;letter-spacing:0.000px;">8</span>
<div style="left:259px;top:344px;width:275px;height:1px;background:#D4D0C8;"></div>
<span class="t" style="left:267.00px;top:328px;color:#000;letter-spacing:-0.100px;">11008</span>
<span class="t" style="left:358.00px;top:328px;color:#000;letter-spacing:-0.267px;">Australia</span>
<span class="t" style="left:445.00px;top:328px;color:#000;letter-spacing:0.000px;">7</span>
<div style="left:259px;top:364px;width:275px;height:1px;background:#D4D0C8;"></div>
<span class="t" style="left:267.00px;top:348px;color:#000;letter-spacing:-0.100px;">11009</span>
<span class="t" style="left:358.00px;top:348px;color:#000;letter-spacing:-0.267px;">Australia</span>
<span class="t" style="left:445.00px;top:348px;color:#000;letter-spacing:0.000px;">5</span>
<div style="left:259px;top:384px;width:275px;height:1px;background:#D4D0C8;"></div>
<span class="t" style="left:267.00px;top:368px;color:#000;letter-spacing:-0.100px;">11010</span>
<span class="t" style="left:358.00px;top:368px;color:#000;letter-spacing:-0.267px;">Australia</span>
<span class="t" style="left:445.00px;top:368px;color:#000;letter-spacing:0.000px;">4</span>
<div style="left:259px;top:404px;width:275px;height:1px;background:#D4D0C8;"></div>
<span class="t" style="left:267.00px;top:388px;color:#000;letter-spacing:0.150px;">11011</span>
<span class="t" style="left:358.00px;top:388px;color:#000;letter-spacing:-0.267px;">Australia</span>
<span class="t" style="left:445.00px;top:388px;color:#000;letter-spacing:0.000px;">4</span>
<div style="left:259px;top:424px;width:275px;height:1px;background:#D4D0C8;"></div>
<span class="t" style="left:267.00px;top:408px;color:#000;letter-spacing:-0.100px;">11012</span>
<span class="t" style="left:357.00px;top:408px;color:#000;letter-spacing:-0.032px;">United States</span>
<span class="t" style="left:445.00px;top:408px;color:#000;letter-spacing:0.000px;">5</span>
<div style="left:350px;top:164px;width:1px;height:263px;background:#D4D0C8;"></div>
<div style="left:437px;top:164px;width:1px;height:263px;background:#D4D0C8;"></div>
<div style="left:533px;top:164px;width:1px;height:263px;background:#D4D0C8;"></div>
<div style="left:259px;top:164px;width:92px;height:21px;box-sizing:border-box;background:#D3D3D3;border:1px dotted #000"></div>
<span class="t" style="left:267.00px;top:168px;color:#000;letter-spacing:-0.100px;">11000</span>
</body></html>
